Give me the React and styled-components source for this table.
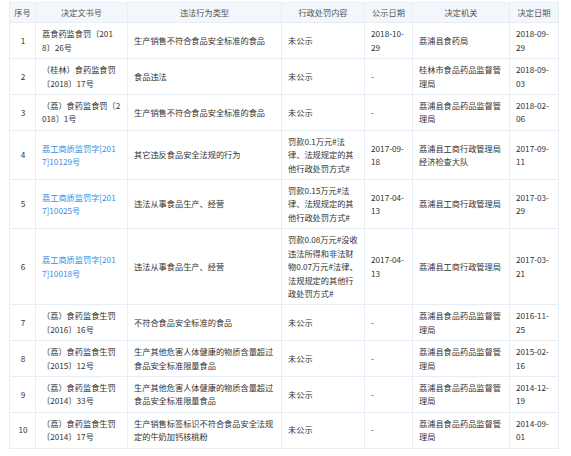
import React from 'react';
import styled, { createGlobalStyle } from 'styled-components';

const GlobalStyle = createGlobalStyle`
  body {
    margin: 0;
    background: #fff;
    font-family: "Noto Sans CJK SC", "Noto Sans", sans-serif;
  }
`;

const columns = [
  { title: '序号', width: 26, center: true },
  { title: '决定文书号', width: 92 },
  { title: '违法行为类型', width: 154 },
  { title: '行政处罚内容', width: 83 },
  { title: '公示日期', width: 48 },
  { title: '决定机关', width: 97 },
  { title: '决定日期', width: 49 },
];

const rows = [
  ['1', '荔食药监食罚〔201\n8〕26号', false, '生产销售不符合食品安全标准的食品', '未公示', '2018-10-\n29', '荔浦县食药局', '2018-09-\n29'],
  ['2', '（桂林）食药监食罚\n〔2018〕17号', false, '食品违法', '未公示', '-', '桂林市食品药品监督管\n理局', '2018-09-\n03'],
  ['3', '（荔）食药监食罚〔2\n018〕1号', false, '生产销售不符合食品安全标准的食品', '未公示', '-', '荔浦县食品药品监督管\n理局', '2018-02-\n06'],
  ['4', '荔工商质监罚字[201\n7]10129号', true, '其它违反食品安全法规的行为', '罚款0.1万元#法\n律、法规规定的其\n他行政处罚方式#', '2017-09-\n18', '荔浦县工商行政管理局\n经济检查大队', '2017-09-\n11'],
  ['5', '荔工商质监罚字[201\n7]10025号', true, '违法从事食品生产、经营', '罚款0.15万元#法\n律、法规规定的其\n他行政处罚方式#', '2017-04-\n13', '荔浦县工商行政管理局', '2017-03-\n29'],
  ['6', '荔工商质监罚字[201\n7]10018号', true, '违法从事食品生产、经营', '罚款0.08万元#没收\n违法所得和非法财\n物0.07万元#法律、\n法规规定的其他行\n政处罚方式#', '2017-04-\n13', '荔浦县工商行政管理局', '2017-03-\n21'],
  ['7', '（荔）食药监食生罚\n〔2016〕16号', false, '不符合食品安全标准的食品', '未公示', '-', '荔浦县食品药品监督管\n理局', '2016-11-\n25'],
  ['8', '（荔）食药监食生罚\n〔2015〕12号', false, '生产其他危害人体健康的物质含量超过\n食品安全标准限量食品', '未公示', '-', '荔浦县食品药品监督管\n理局', '2015-02-\n16'],
  ['9', '（荔）食药监食生罚\n〔2014〕33号', false, '生产其他危害人体健康的物质含量超过\n食品安全标准限量食品', '未公示', '-', '荔浦县食品药品监督管\n理局', '2014-12-\n19'],
  ['10', '（荔）食药监食生罚\n〔2014〕17号', false, '生产销售标签标识不符合食品安全法规\n定的牛奶加钙核桃粉', '未公示', '-', '荔浦县食品药品监督管\n理局', '2014-09-\n01'],
];

const App = () => {
  return (
    <Page>
      <GlobalStyle />
      <Table>
        <colgroup>
          {columns.map((c) => (
            <col key={c.title} style={{ width: c.width }} />
          ))}
        </colgroup>
        <thead>
          <tr>
            {columns.map((c) => (
              <HeadCell key={c.title}>{c.title}</HeadCell>
            ))}
          </tr>
        </thead>
        <tbody>
          {rows.map(([no, doc, isLink, type, content, pubDate, org, date]) => (
            <tr key={no}>
              <Cell $center>{no}</Cell>
              <Cell>{isLink ? <DocLink href="#">{doc}</DocLink> : doc}</Cell>
              <Cell>{type}</Cell>
              <Cell>{content}</Cell>
              <Cell>{pubDate}</Cell>
              <Cell>{org}</Cell>
              <Cell>{date}</Cell>
            </tr>
          ))}
        </tbody>
      </Table>
    </Page>
  );
};

const Page = styled.div`
  padding: 2px 0 0 9px;
`;

const Table = styled.table`
  width: 549px;
  table-layout: fixed;
  border-collapse: collapse;
  border: 1px solid #e6edf4;
  font-size: 8.2px;
  line-height: 13.4px;
  color: #333;
`;

const HeadCell = styled.th`
  background: #f3f7fb;
  color: #555;
  font-weight: normal;
  text-align: center;
  padding: 3px 0;
  border: 1px solid #e6edf4;
  white-space: nowrap;
`;

const Cell = styled.td`
  padding: 4px 5px 4px 6px;
  border: 1px solid #e6edf4;
  vertical-align: middle;
  text-align: ${(p) => (p.$center ? 'center' : 'left')};
  white-space: pre;
  overflow: visible;
`;

const DocLink = styled.a`
  color: #3b8ee2;
  text-decoration: none;
`;

export default App;
